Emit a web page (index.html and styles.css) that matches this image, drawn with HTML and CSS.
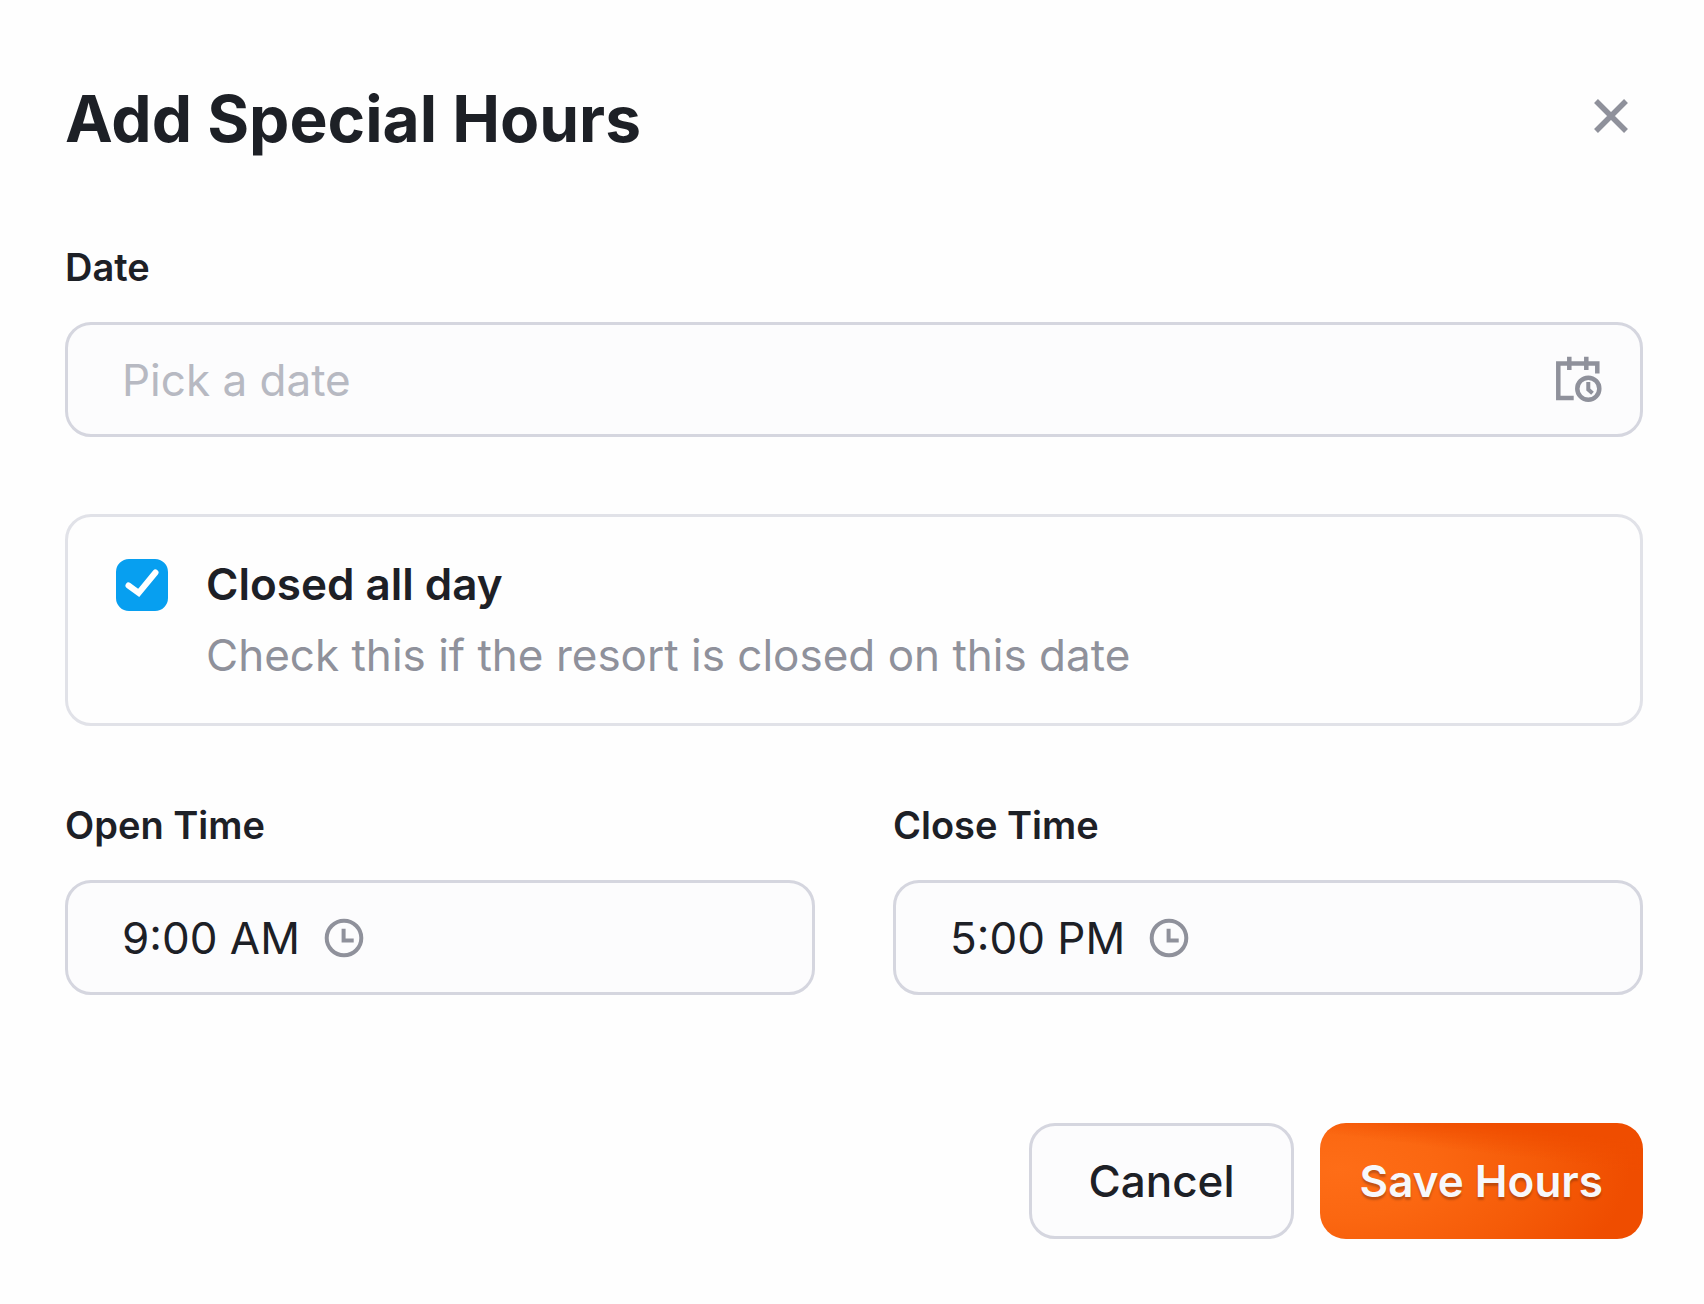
FILE: index.html
```html
<!DOCTYPE html>
<html lang="en">
<head>
  <meta charset="UTF-8" />
  <meta name="viewport" content="width=device-width, initial-scale=1.0" />
  <title>Add Special Hours</title>
  <link rel="stylesheet" href="styles.css">
</head>
<body>
  <main class="dialog">
    <header class="dialog-header">
      <h1>Add Special Hours</h1>
      <button type="button" class="close-btn" aria-label="Close">
        <svg width="34" height="34" viewBox="0 0 34 34" fill="none" stroke="currentColor" stroke-width="5.5">
          <path d="M2 2L32 32M32 2L2 32" />
        </svg>
      </button>
    </header>

    <form class="hours-form">
      <div class="field">
        <label for="date">Date</label>
        <div class="control">
          <input type="text" id="date" class="date-input" placeholder="Pick a date" />
          <svg class="icon" width="50" height="50" viewBox="0 0 50 50" fill="none" stroke="currentColor" stroke-width="4.5">
            <path d="M19.7 43H4.3V8.5H43.3V18.5M15.3 1.7V15M32.3 1.7V15" />
            <circle cx="34.3" cy="33.7" r="11" />
            <path d="M34.3 27V34.5L38.5 38.3" stroke-width="4" />
          </svg>
        </div>
      </div>

      <!-- Closed all day -->
      <div class="closed-card">
        <span class="checkbox">
          <input type="checkbox" id="closed" aria-describedby="closed-hint" checked />
          <svg width="52" height="52" viewBox="0 0 52 52" fill="none" stroke="#fff" stroke-width="6" stroke-linecap="round">
            <path d="M12.5 26.5L22.7 34L39.5 13.5" />
          </svg>
        </span>
        <div class="closed-text">
          <label for="closed">Closed all day</label>
          <p id="closed-hint">Check this if the resort is closed on this date</p>
        </div>
      </div>

      <div class="times">
        <div class="field">
          <label for="open-time">Open Time</label>
          <div class="control">
            <input type="text" id="open-time" class="time-input" value="9:00 AM" />
            <svg class="icon" width="40" height="40" viewBox="0 0 40 40" fill="none" stroke="currentColor" stroke-width="4">
              <circle cx="20" cy="20" r="17.3" />
              <path d="M19.6 10.7V22.5H29.7" />
            </svg>
          </div>
        </div>
        <div class="field">
          <label for="close-time">Close Time</label>
          <div class="control">
            <input type="text" id="close-time" class="time-input" value="5:00 PM" />
            <svg class="icon" width="40" height="40" viewBox="0 0 40 40" fill="none" stroke="currentColor" stroke-width="4">
              <circle cx="20" cy="20" r="17.3" />
              <path d="M19.6 10.7V22.5H29.7" />
            </svg>
          </div>
        </div>
      </div>

      <div class="actions">
        <button type="button" class="btn btn-cancel">Cancel</button>
        <button type="submit" class="btn btn-save">Save Hours</button>
      </div>
    </form>
  </main>
</body>
</html>
```
FILE: styles.css
```css
* {
  box-sizing: border-box;
}
body {
  margin: 0;
  background: #fefefe;
  color: #1d2026;
  font-family: Inter, "Liberation Sans", sans-serif;
  font-size: 44px;
}
button, input {
  font: inherit;
  color: inherit;
}
.dialog {
  padding: 84px 61px 64px 65px;
}
.dialog-header {
  display: flex;
  justify-content: space-between;
  align-items: flex-start;
  margin-bottom: 91px;
}
h1 {
  margin: 0;
  font-size: 64px;
  font-weight: 700;
  line-height: 70px;
}
.close-btn {
  display: grid;
  place-items: center;
  width: 64px;
  height: 64px;
  padding: 0;
  border: none;
  background: none;
  color: #8f919b;
  cursor: pointer;
}
.hours-form {
  display: grid;
  gap: 77px;
}
.field {
  display: grid;
  gap: 32px;
}
.field label {
  font-size: 38px;
  font-weight: 600;
  line-height: 45px;
}
.control {
  display: flex;
  align-items: center;
  gap: 24px;
  height: 115px;
  padding: 0 36px 0 54px;
  border: 3px solid #d5d6df;
  border-radius: 26px;
  background: #fcfcfd;
}
.control input {
  padding: 0;
  border: none;
  outline: none;
  background: none;
}
.control input::placeholder {
  color: #b7b9c2;
  opacity: 1;
}
.date-input {
  flex: 1;
  min-width: 0;
}
.time-input {
  field-sizing: content;
}
.icon {
  flex: none;
  color: #8f919b;
}
.closed-card {
  display: flex;
  gap: 38px;
  padding: 32px 48px;
  border: 3px solid #e1e2e8;
  border-radius: 26px;
}
.checkbox {
  display: grid;
  align-self: start;
  margin-top: 10px;
}
.checkbox input,
.checkbox svg {
  grid-area: 1 / 1;
}
.checkbox input {
  appearance: none;
  width: 52px;
  height: 52px;
  margin: 0;
  border: 3px solid #d5d6df;
  border-radius: 13px;
}
.checkbox input:checked {
  border-color: #079ff0;
  background: #079ff0;
}
.checkbox svg {
  visibility: hidden;
  pointer-events: none;
}
.checkbox input:checked + svg {
  visibility: visible;
}
.closed-text {
  line-height: 71px;
}
.closed-text label {
  display: block;
  font-weight: 600;
}
.closed-text p {
  margin: 0;
  color: #8f919b;
}
.times {
  display: grid;
  grid-template-columns: 1fr 1fr;
  gap: 78px;
}
.actions {
  display: flex;
  justify-content: flex-end;
  gap: 26px;
  margin-top: 51px;
}
.btn {
  height: 116px;
  border-radius: 26px;
  cursor: pointer;
}
.btn-cancel {
  padding: 0 56px;
  border: 3px solid #d5d6df;
  background: #fcfcfd;
  font-weight: 500;
}
.btn-save {
  padding: 0 40px;
  border: none;
  background:
    linear-gradient(187deg, #ef4d00 12%, rgba(239, 77, 0, 0) 32%),
    radial-gradient(ellipse 100% 140% at 6% 40%, #fe6d17 0%, #fb6711 30%, #f55b08 62%, #ef4d00 90%);
  color: #f7f8fb;
  font-weight: 600;
  text-shadow: 0 3px 2px rgba(60, 30, 20, 0.3);
}
```
